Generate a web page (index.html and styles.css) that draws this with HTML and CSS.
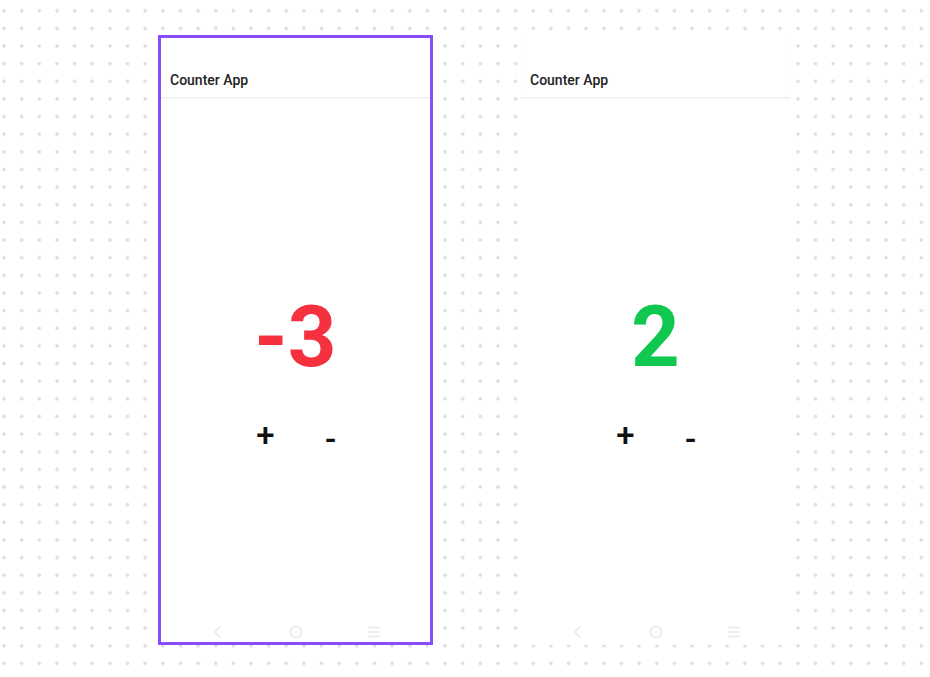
FILE: index.html
```html
<html>
<head><title>Counter App</title>
<link rel="stylesheet" href="styles.css">
</head>
<body>
<div class="canvas">

  <div class="phone selected">
    <div class="appbar"><span class="title">Counter App</span></div>
    <div class="screen">
      <div class="count negative">-3</div>
      <div class="buttons">
        <span class="btn">+</span>
        <span class="btn minus">-</span>
      </div>
    </div>
    <div class="navbar">
      <span class="nav"><svg width="14" height="14" viewBox="0 0 14 14"><path d="M9 1.5 L4 7 L9 12.5" fill="none" stroke="#e9e9ec" stroke-width="1.3"/></svg></span>
      <span class="nav"><svg width="14" height="14" viewBox="0 0 14 14"><circle cx="7" cy="7" r="5.5" fill="none" stroke="#e9e9ec" stroke-width="1.4"/></svg></span>
      <span class="nav"><svg width="14" height="14" viewBox="0 0 14 14"><path d="M1 2.5 H13 M1 7 H13 M1 11.5 H13" stroke="#e9e9ec" stroke-width="1.3"/></svg></span>
    </div>
  </div>

  <div class="phone">
    <div class="appbar"><span class="title">Counter App</span></div>
    <div class="screen">
      <div class="count positive">2</div>
      <div class="buttons">
        <span class="btn">+</span>
        <span class="btn minus">-</span>
      </div>
    </div>
    <div class="navbar">
      <span class="nav"><svg width="14" height="14" viewBox="0 0 14 14"><path d="M9 1.5 L4 7 L9 12.5" fill="none" stroke="#e9e9ec" stroke-width="1.3"/></svg></span>
      <span class="nav"><svg width="14" height="14" viewBox="0 0 14 14"><circle cx="7" cy="7" r="5.5" fill="none" stroke="#e9e9ec" stroke-width="1.4"/></svg></span>
      <span class="nav"><svg width="14" height="14" viewBox="0 0 14 14"><path d="M1 2.5 H13 M1 7 H13 M1 11.5 H13" stroke="#e9e9ec" stroke-width="1.3"/></svg></span>
    </div>
  </div>

</div>
</body>
</html>
```

FILE: styles.css
```css
body {
margin: 0;
padding: 0;
font-family: Roboto, "Liberation Sans", sans-serif;
background-color: #ffffff;
background-image: radial-gradient(circle, #d9dbe6 1.4px, transparent 1.9px);
background-size: 17.65px 17.65px;
background-position: -4.8px 1.9px;
height: 677px;
overflow: hidden;
}

.canvas {
display: flex;
gap: 85px;
padding-top: 35px;
padding-left: 158px;
}

.phone {
width: 275px;
height: 610px;
box-sizing: border-box;
border: 3px solid #ffffff;
background: #ffffff;
display: flex;
flex-direction: column;
}

.phone.selected {
border-color: #8b4cfc;
}

.appbar {
height: 60px;
box-sizing: border-box;
display: flex;
align-items: flex-end;
padding: 0 0 9px 9px;
border-bottom: 1px solid #ececee;
box-shadow: 0 1px 2px rgba(0,0,0,0.04);
}

.title {
font-size: 14px;
font-weight: 500;
color: #222222;
}

.screen {
flex: 1;
display: flex;
flex-direction: column;
align-items: center;
padding-top: 197px;
}

.count {
font-size: 85px;
font-weight: 700;
line-height: 85px;
}

.negative {
color: #f5303f;
}

.positive {
color: #10c84f;
}

.buttons {
display: flex;
gap: 25px;
margin-top: 41px;
margin-left: 5px;
}

.btn {
width: 40px;
text-align: center;
font-size: 33px;
font-weight: 500;
line-height: 30px;
color: #111111;
}

.btn.minus {
padding-top: 4px;
}

.navbar {
height: 20px;
display: flex;
justify-content: center;
align-items: center;
}

.nav {
width: 78px;
display: flex;
justify-content: center;
}
```
